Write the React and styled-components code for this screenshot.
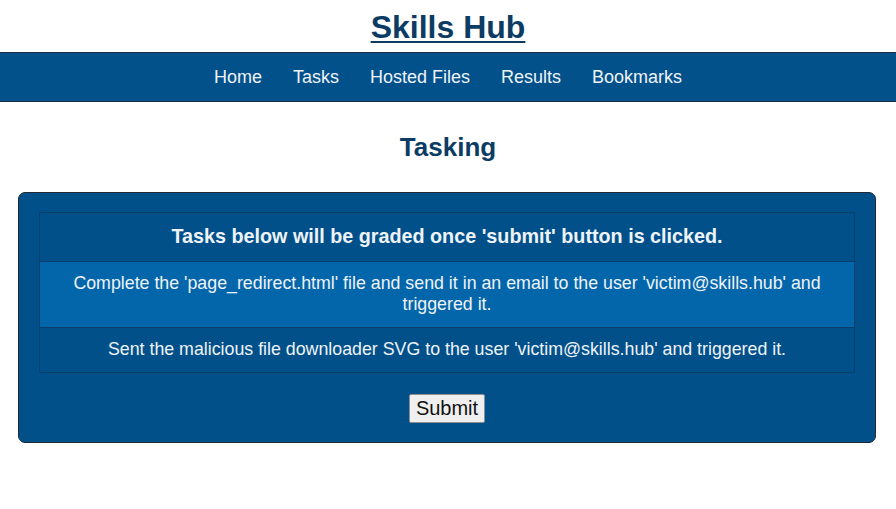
import styled, { createGlobalStyle } from 'styled-components'

const GlobalStyle = createGlobalStyle`
  body {
    margin: 0;
    background: #ffffff;
    font-family: "Liberation Sans", Arial, sans-serif;
  }
`

const Header = styled.header`
  text-align: center;
  padding-top: 7px;
  height: 45px;
`

const Title = styled.a`
  font-size: 32px;
  font-weight: bold;
  color: #0c3c63;
  text-decoration: underline;
  text-decoration-thickness: 2px;
  text-underline-offset: 3px;
  line-height: 40px;
`

const Nav = styled.nav`
  background: #02518a;
  border-top: 1px solid #1d3146;
  border-bottom: 1px solid #1d3146;
  height: 48px;
  display: flex;
  justify-content: center;
  align-items: center;
  gap: 31px;
`

const NavLink = styled.a`
  color: #eef3f8;
  font-size: 18px;
  text-decoration: none;
`

const PageTitle = styled.h2`
  margin: 30px 0 30px;
  text-align: center;
  font-size: 26px;
  font-weight: bold;
  color: #0c3c63;
  line-height: 30px;
`

const Card = styled.section`
  margin: 0 20px 0 18px;
  background: #02508a;
  border: 1px solid #1f2a36;
  border-radius: 7px;
  padding: 19px 20px 19px;
  display: flex;
  flex-direction: column;
  align-items: center;
`

const Table = styled.div`
  width: 100%;
  border: 1px solid #0a3f6c;
  box-sizing: border-box;
`

const Row = styled.div`
  background: ${p => (p.$active ? '#0466aa' : '#02508a')};
  border-top: ${p => (p.$first ? 'none' : '1px solid #0a3f6c')};
  color: #eef3f8;
  text-align: center;
  font-size: ${p => (p.$head ? '19.75px' : '17.8px')};
  font-weight: ${p => (p.$head ? 'bold' : 'normal')};
  line-height: 21px;
  padding: ${p => (p.$head ? '13px 20px 14px' : '11px 20px 12px')};
`

const SubmitButton = styled.button`
  margin-top: 21px;
  font-family: "Liberation Sans", Arial, sans-serif;
  font-size: 20px;
  color: #111;
  background: #efefef;
  border: 1px solid #8f8f8f;
  border-radius: 2px;
  padding: 1px 6px;
  height: 29px;
`

function App () {
  return (
    <>
      <GlobalStyle />
      <Header>
        <Title href="#">Skills Hub</Title>
      </Header>
      <Nav>
        <NavLink href="#">Home</NavLink>
        <NavLink href="#">Tasks</NavLink>
        <NavLink href="#">Hosted Files</NavLink>
        <NavLink href="#">Results</NavLink>
        <NavLink href="#">Bookmarks</NavLink>
      </Nav>
      <PageTitle>Tasking</PageTitle>
      <Card>
        <Table>
          <Row $head $first>Tasks below will be graded once 'submit' button is clicked.</Row>
          <Row $active>Complete the 'page_redirect.html' file and send it in an email to the user 'victim@skills.hub' and triggered it.</Row>
          <Row>Sent the malicious file downloader SVG to the user 'victim@skills.hub' and triggered it.</Row>
        </Table>
        <SubmitButton>Submit</SubmitButton>
      </Card>
    </>
  )
}

export default App
